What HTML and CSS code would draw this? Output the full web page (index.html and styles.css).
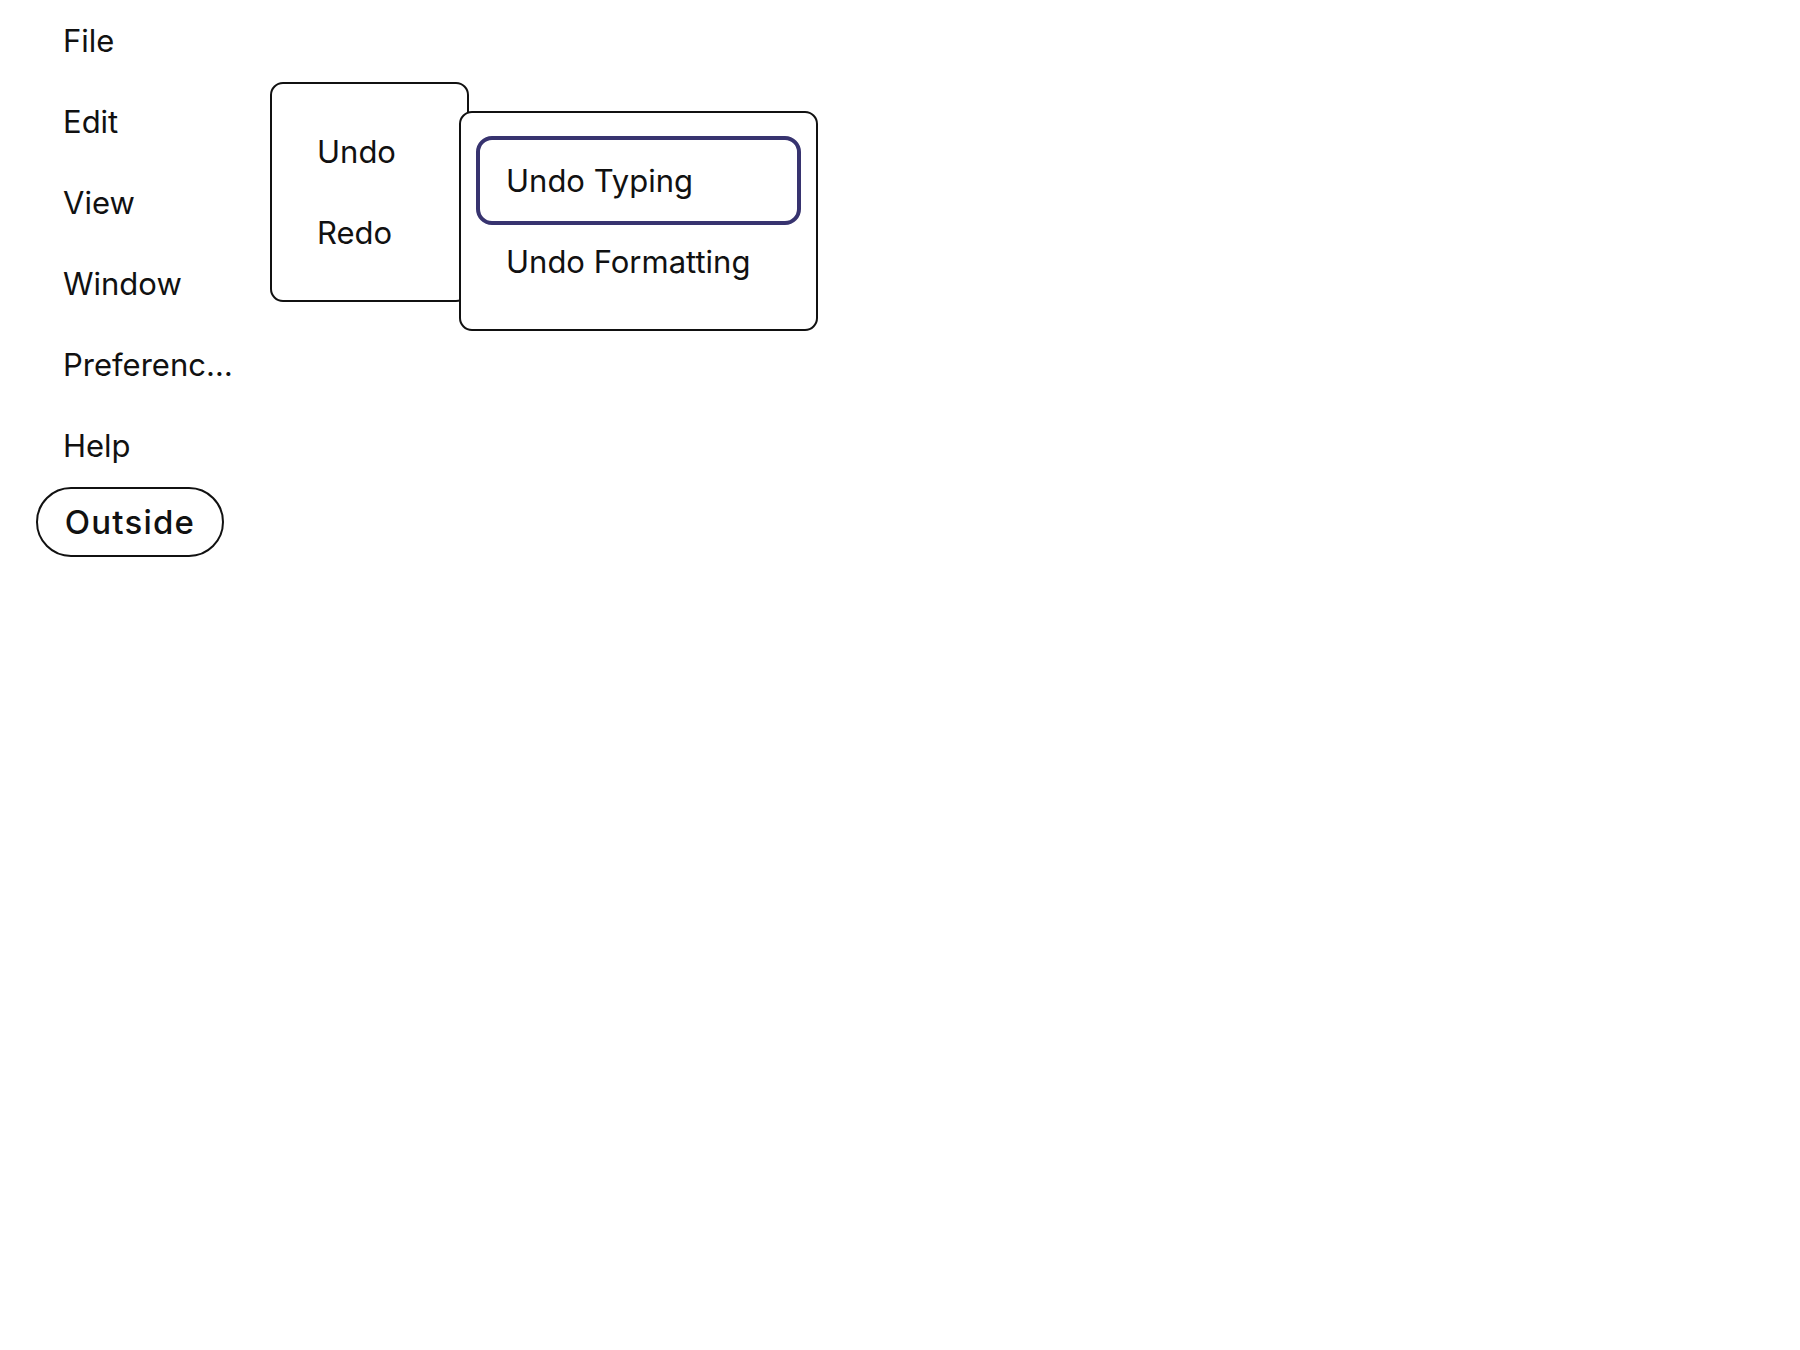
FILE: index.html
```html
<!DOCTYPE html>
<html lang="en">
<head>
<meta charset="utf-8">
<title>Menu</title>
<link rel="stylesheet" href="styles.css">
</head>
<body>
<div class="app">
  <nav class="menubar">
    <div class="bar-item">File</div>
    <div class="bar-item">Edit</div>
    <div class="bar-item">View</div>
    <div class="bar-item">Window</div>
    <div class="bar-item"><span class="trunc">Preferences</span></div>
    <div class="bar-item">Help</div>
  </nav>
  <button class="outside">Outside</button>

  <div class="menu menu-edit">
    <div class="menu-item">Undo</div>
    <div class="menu-item">Redo</div>
  </div>
  <div class="menu menu-undo">
    <div class="menu-item focused">Undo Typing</div>
    <div class="menu-item">Undo Formatting</div>
  </div>
</div>
</body>
</html>
```

FILE: styles.css
```css
html, body {
  margin: 0;
  padding: 0;
  background: #ffffff;
}
body {
  font-family: "Inter", "Noto Sans", sans-serif;
  font-size: 31px;
  color: #111111;
}
.app {
  position: relative;
  width: 1800px;
  height: 1350px;
}
.menubar {
  display: flex;
  flex-direction: column;
  width: 240px;
}
.bar-item {
  height: 81px;
  display: flex;
  align-items: center;
  padding-left: 63px;
  box-sizing: border-box;
  overflow: hidden;
}
.trunc {
  display: block;
  min-width: 0;
  white-space: nowrap;
  overflow: hidden;
  text-overflow: ellipsis;
}
.outside {
  margin-left: 36px;
  margin-top: 1px;
  height: 70px;
  width: 188px;
  border: 2px solid #111111;
  border-radius: 35px;
  background: #ffffff;
  font-family: "Inter", "Noto Sans", sans-serif;
  font-size: 33px;
  font-weight: 500;
  letter-spacing: 1.2px;
  color: #111111;
  padding: 0;
}
.menu {
  position: absolute;
  box-sizing: border-box;
  border: 2px solid #111111;
  border-radius: 13px;
  background: #ffffff;
  padding: 27px 19px 25px 19px;
  display: flex;
  flex-direction: column;
}
.menu-edit {
  left: 270px;
  top: 82px;
  width: 199px;
  height: 220px;
}
.menu-undo {
  left: 459px;
  top: 111px;
  width: 359px;
  height: 220px;
}
.menu-item {
  height: 81px;
  display: flex;
  align-items: center;
  padding-left: 26px;
  border-radius: 12px;
  white-space: nowrap;
}
.menu-item.focused {
  outline: 4px solid #37336f;
  outline-offset: 0;
}
```
